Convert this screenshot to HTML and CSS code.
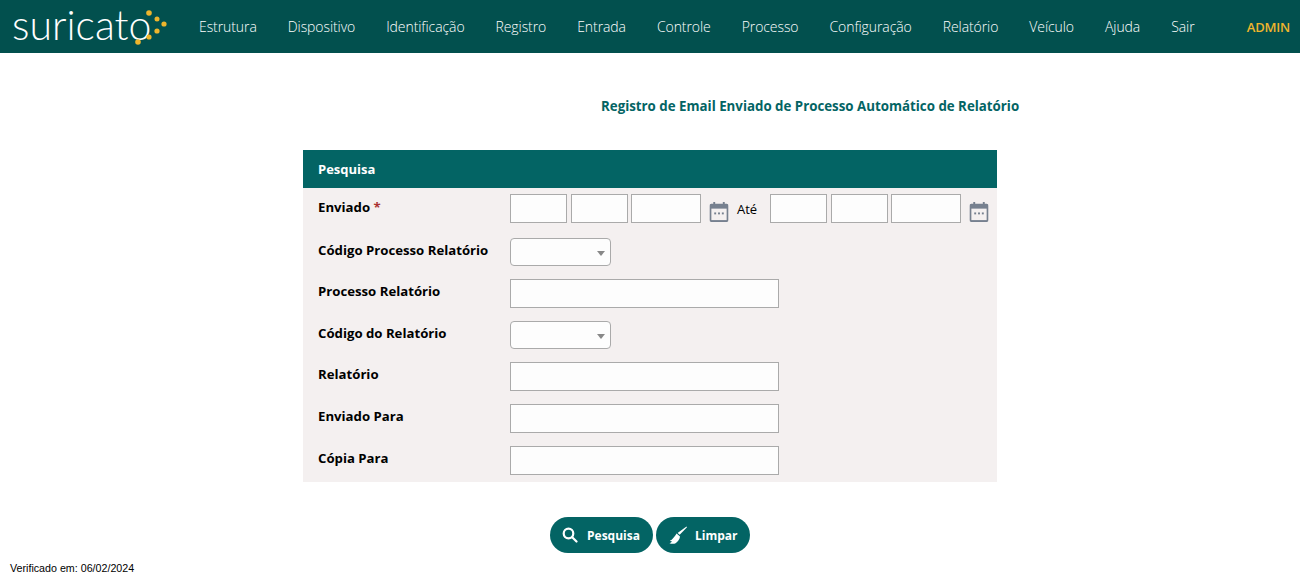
FILE: index.html
```html
<!DOCTYPE html>
<html lang="pt">
<head>
<meta charset="utf-8">
<title>Registro de Email</title>
<link rel="stylesheet" href="styles.css">
</head>
<body>
<header class="topbar">
  <div class="logo">
    <span class="logo-text">suricato</span>
    <svg class="logo-dots" width="36" height="40" viewBox="0 0 36 40">
      <g fill="#eeb52c">
        <circle cx="17" cy="4" r="2.8"/><circle cx="25" cy="10" r="2.5"/><circle cx="32" cy="15" r="2.6"/>
        <circle cx="25" cy="22" r="2.6"/><circle cx="17" cy="28" r="2.6"/><circle cx="6" cy="33" r="2.8"/>
      </g>
    </svg>
  </div>
  <nav class="menu">
    <a>Estrutura</a><a>Dispositivo</a><a>Identificação</a><a>Registro</a><a>Entrada</a><a>Controle</a><a>Processo</a><a>Configuração</a><a>Relatório</a><a>Veículo</a><a>Ajuda</a><a>Sair</a>
  </nav>
  <span class="user">ADMIN</span>
</header>

<main class="content">
  <h1 class="title">Registro de Email Enviado de Processo Automático de Relatório</h1>
  <section class="panel">
    <h2 class="panel-head">Pesquisa</h2>
    <div class="panel-body">
      <div class="row row-date">
        <label class="lbl">Enviado <span class="req">*</span></label>
        <input class="field f-dd"><input class="field f-dd"><input class="field f-yy">
        <svg class="cal" viewBox="0 0 20 22" width="20" height="21"><use href="#cal"/></svg>
        <span class="ate">Até</span>
        <input class="field f-dd"><input class="field f-dd"><input class="field f-yy">
        <svg class="cal" viewBox="0 0 20 22" width="20" height="21"><use href="#cal"/></svg>
      </div>
      <div class="row row-a">
        <label class="lbl">Código Processo Relatório</label>
        <div class="select"><i class="caret"></i></div>
      </div>
      <div class="row row-b">
        <label class="lbl">Processo Relatório</label>
        <input class="field f-long">
      </div>
      <div class="row row-c">
        <label class="lbl">Código do Relatório</label>
        <div class="select"><i class="caret"></i></div>
      </div>
      <div class="row row-d">
        <label class="lbl">Relatório</label>
        <input class="field f-long">
      </div>
      <div class="row row-e">
        <label class="lbl">Enviado Para</label>
        <input class="field f-long">
      </div>
      <div class="row row-e">
        <label class="lbl">Cópia Para</label>
        <input class="field f-long">
      </div>
    </div>
  </section>
  <div class="actions">
    <button class="btn btn-search">
      <svg width="16" height="16" viewBox="0 0 16 16" fill="none" stroke="#fff" stroke-width="2.2" stroke-linecap="round"><circle cx="6.5" cy="6.5" r="4.8"/><path d="M10.2 10.2 14.5 14.5"/></svg>
      Pesquisa
    </button>
    <button class="btn btn-clear">
      <svg width="18" height="18" viewBox="0 0 18 18" fill="#fff"><path d="M17.5.5 18 1.2 10.7 8.8 8.6 6.9Z"/><path d="M7.6 7.4 11 10.5C10.8 13 9 16 6.2 17.4 4.600 18 2 17.800.5 17.200 2 16.700 2.800 15.700 3 15 2.200 15.300 1.400 15.200.800 14.800 3.500 13.600 5.700 10.300 7.600 7.400Z"/></svg>
      Limpar
    </button>
  </div>
</main>
<footer class="verified">Verificado em: 06/02/2024</footer>

<svg class="defs" width="0" height="0">
  <symbol id="cal" viewBox="0 0 20 22">
    <path fill="#76808f" d="M4 1h2v2h8V1h2v2h2a2 2 0 0 1 2 2v15a2 2 0 0 1-2 2H2a2 2 0 0 1-2-2V5a2 2 0 0 1 2-2h2Z"/>
    <rect x="2" y="8" width="16" height="12" fill="#f4f0f0"/>
    <g fill="#76808f"><rect x="5" y="12" width="2" height="2"/><rect x="9" y="12" width="2" height="2"/><rect x="13" y="12" width="2" height="2"/></g>
  </symbol>
</svg>
</body>
</html>
```
FILE: styles.css
```css
* { box-sizing: border-box; }
html, body { margin: 0; height: 583px; overflow: hidden; }
body { background: #fff; font-family: "Open Sans", sans-serif; color: #000; position: relative; }

.topbar { height: 53px; background: #02504e; display: flex; align-items: center; padding: 0 10px 0 12px; }
.logo { width: 187px; flex: none; position: relative; height: 53px; }
.logo-text { display: block; font-family: Lato, sans-serif; font-weight: 300; font-size: 41px; line-height: 50px; color: #fff; }
.logo-dots { position: absolute; left: 120px; top: 9px; }
.menu { display: flex; gap: 31px; flex: 1; font-size: 14px; font-weight: 300; color: #fff; letter-spacing: -0.08px; }
.menu a { white-space: nowrap; }
.user { color: #eeb52c; font-size: 13px; font-weight: 600; letter-spacing: -0.2px; }

.content { display: flex; flex-direction: column; align-items: center; }
.title { margin: 44px 0 0; padding-left: 601px; width: 1300px; font-size: 13.3px; line-height: 18px; font-weight: 700; color: #036464; white-space: nowrap; }
.panel { width: 694px; margin-top: 35px; background: #f4f0f0; }
.panel-head { margin: 0; height: 38px; background: #036464; color: #fff; font-size: 13px; font-weight: 700; line-height: 38px; padding-left: 15px; }
.panel-body { padding: 6px 0 0 15px; height: 294px; }
.row { display: flex; align-items: flex-start; }
.lbl { width: 192px; flex: none; font-size: 13.2px; font-weight: 700; line-height: 18px; padding-top: 3px; white-space: nowrap; }
.row-date .lbl { padding-top: 4px; }
.req { color: #a33; }
.field { height: 29px; background: #fdfdfd; border: 1px solid #aaa; border-radius: 0; padding: 0; display: block; }
.f-dd { width: 57px; margin-right: 4px; }
.f-dd + .f-dd { margin-right: 3px; }
.f-yy { width: 70px; }
.f-long { width: 269px; }
.cal { margin: 7px 0 0 8px; flex: none; }
.ate { font-size: 13px; line-height: 18px; padding-top: 6px; width: 33px; margin-left: 8px; }
.row-a { margin-top: 15px; }
.row-b, .row-c, .row-d, .row-e { margin-top: 13px; }
.select { width: 101px; height: 28px; background: #fdfdfd; border: 1px solid #aaa; border-radius: 4px; position: relative; }
.caret { position: absolute; right: 5px; top: 12px; border: 4px solid transparent; border-top: 5px solid #888; border-bottom: 0; }

.actions { display: flex; gap: 3px; margin-top: 35px; }
.btn { height: 36px; border: 0; border-radius: 18px; background: #036464; color: #fff; font-family: "Open Sans", sans-serif; font-size: 12px; font-weight: 700; display: flex; align-items: center; padding: 0; }
.btn-search { width: 103px; padding-left: 12px; gap: 9px; }
.btn-clear { width: 94px; padding-left: 13px; gap: 8px; }
.verified { position: absolute; left: 10px; top: 563px; font-family: "Liberation Sans", sans-serif; font-size: 10.7px; line-height: 11px; }
.defs { position: absolute; }
```
